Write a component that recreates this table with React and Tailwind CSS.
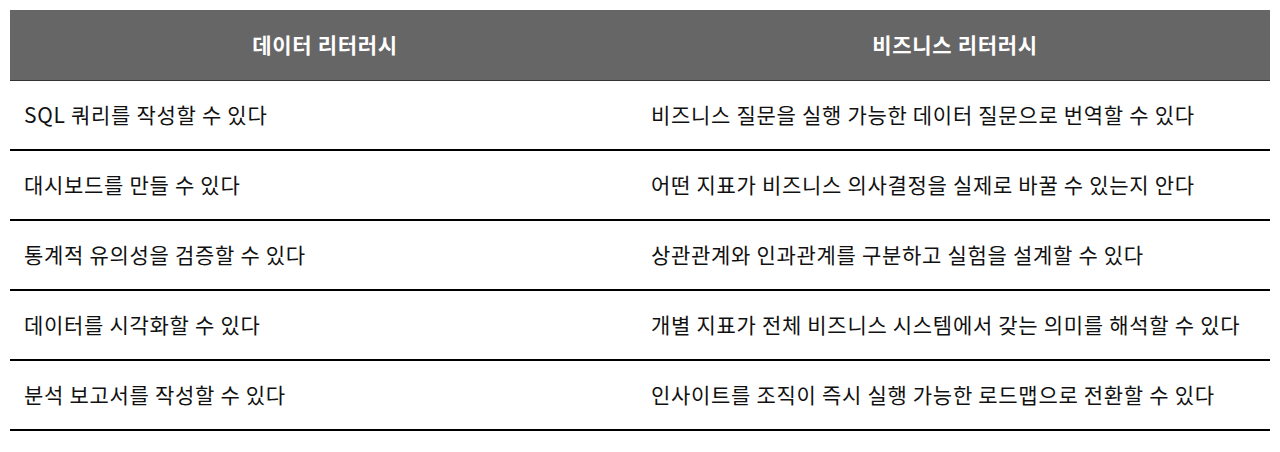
import React from "react";

const rows = [
  ["SQL 쿼리를 작성할 수 있다", "비즈니스 질문을 실행 가능한 데이터 질문으로 번역할 수 있다"],
  ["대시보드를 만들 수 있다", "어떤 지표가 비즈니스 의사결정을 실제로 바꿀 수 있는지 안다"],
  ["통계적 유의성을 검증할 수 있다", "상관관계와 인과관계를 구분하고 실험을 설계할 수 있다"],
  ["데이터를 시각화할 수 있다", "개별 지표가 전체 비즈니스 시스템에서 갖는 의미를 해석할 수 있다"],
  ["분석 보고서를 작성할 수 있다", "인사이트를 조직이 즉시 실행 가능한 로드맵으로 전환할 수 있다"],
];

const App = () => {
  return (
    <div
      className="w-[1280px] h-[452px] bg-white px-[10px] pt-[10px]"
      style={{ fontFamily: '"Noto Sans CJK KR", "Noto Sans", sans-serif' }}
    >
      <div className="w-[1260px]">
        {/* Header */}
        <div className="grid grid-cols-2 h-[71px] bg-[#666666] border-b border-[#333333] text-white font-bold text-[21px] tracking-[0.7px]">
          <div className="flex items-center justify-center">데이터 리터러시</div>
          <div className="flex items-center justify-center">비즈니스 리터러시</div>
        </div>

        {/* Rows */}
        {rows.map(([left, right], i) => (
          <div key={i} className="grid grid-cols-2 h-[70px] border-b-2 border-black text-[21px] tracking-[0.7px] text-[#111111]">
            <div className="flex items-center pl-[14px]">{left}</div>
            <div className="flex items-center pl-[11px]">{right}</div>
          </div>
        ))}
      </div>
    </div>
  );
};

export default App;
